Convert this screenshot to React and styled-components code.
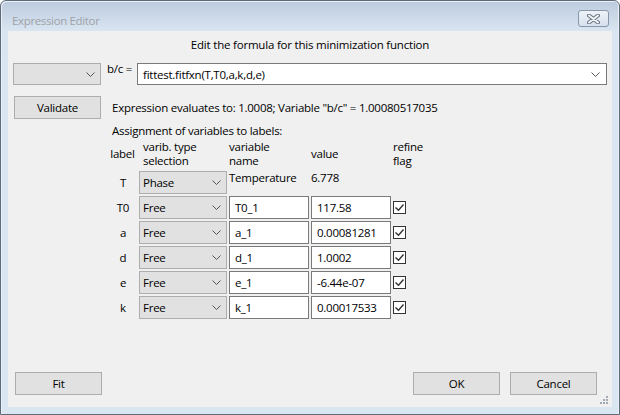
import React from "react";
import styled, { createGlobalStyle } from "styled-components";

const GlobalStyle = createGlobalStyle`
  html, body {
    margin: 0;
    padding: 0;
    background: #ffffff;
  }
  body {
    font-family: "Open Sans", "Liberation Sans", Arial, sans-serif;
    font-size: 11.5px;
    letter-spacing: -0.25px;
    color: #000000;
  }
`;

const rows = [
  { label: "T0", type: "Free", name: "T0_1", value: "117.58" },
  { label: "a", type: "Free", name: "a_1", value: "0.00081281" },
  { label: "d", type: "Free", name: "d_1", value: "1.0002" },
  { label: "e", type: "Free", name: "e_1", value: "-6.44e-07" },
  { label: "k", type: "Free", name: "k_1", value: "0.00017533" },
];

const Chevron = () => (
  <svg width="9" height="5" viewBox="0 0 9 5">
    <polyline points="0.5,0.5 4.5,4.5 8.5,0.5" fill="none" stroke="#555555" strokeWidth="1" />
  </svg>
);

const CloseGlyph = () => (
  <svg width="13" height="10" viewBox="0 0 13 10">
    <path d="M2 1.5 L11 8.5 M11 1.5 L2 8.5" stroke="#6b7785" strokeWidth="4" strokeLinecap="round" />
    <path d="M2 1.5 L11 8.5 M11 1.5 L2 8.5" stroke="#f4f6f8" strokeWidth="2" strokeLinecap="round" />
  </svg>
);

const Tick = () => (
  <svg width="11" height="11" viewBox="0 0 11 11">
    <polyline points="1.5,5.5 4.5,8.2 9.5,2.5" fill="none" stroke="#333333" strokeWidth="1.4" />
  </svg>
);

const Grip = () => (
  <svg width="9" height="9" viewBox="0 0 9 9">
    {[
      [6, 0],
      [3, 3],
      [6, 3],
      [0, 6],
      [3, 6],
      [6, 6],
    ].map(([x, y]) => (
      <rect key={`${x}-${y}`} x={x} y={y} width="2" height="2" fill="#a3a9b0" />
    ))}
  </svg>
);

export default function App() {
  return (
    <>
      <GlobalStyle />
      <Window>
        <TitleBar>
          <TitleText>Expression Editor</TitleText>
          <CloseButton>
            <CloseGlyph />
          </CloseButton>
        </TitleBar>
        <Client>
          <Heading>Edit the formula for this minimization function</Heading>
          <FormulaRow>
            <Combo $width={88}>
              <span />
              <Chevron />
            </Combo>
            <EqLabel>b/c =</EqLabel>
            <FormulaBox>
              <span>fittest.fitfxn(T,T0,a,k,d,e)</span>
              <Chevron />
            </FormulaBox>
          </FormulaRow>
          <ValidateRow>
            <Button>Validate</Button>
            <Message>
              Expression evaluates to: 1.0008; Variable "b/c" = 1.00080517035
            </Message>
          </ValidateRow>
          <Assignment>Assignment of variables to labels:</Assignment>
          <Grid>
            <HeadCell $center>label</HeadCell>
            <HeadCell $indent={4}>
              varib. type
              <br />
              selection
            </HeadCell>
            <HeadCell>
              variable
              <br />
              name
            </HeadCell>
            <HeadCell>value</HeadCell>
            <HeadCell>
              refine
              <br />
              flag
            </HeadCell>

            <RowLabel>T</RowLabel>
            <Combo>
              <span>Phase</span>
              <Chevron />
            </Combo>
            <PlainValue>Temperature</PlainValue>
            <PlainValue>6.778</PlainValue>
            <span />

            {rows.map((r) => (
              <React.Fragment key={r.label}>
                <RowLabel>{r.label}</RowLabel>
                <Combo>
                  <span>{r.type}</span>
                  <Chevron />
                </Combo>
                <Field>{r.name}</Field>
                <Field>{r.value}</Field>
                <CheckBox>
                  <Tick />
                </CheckBox>
              </React.Fragment>
            ))}
          </Grid>
          <Footer>
            <Button>Fit</Button>
            <FooterRight>
              <Button>OK</Button>
              <Button>Cancel</Button>
            </FooterRight>
          </Footer>
          <GripCorner>
            <Grip />
          </GripCorner>
        </Client>
      </Window>
    </>
  );
}

const Window = styled.div`
  width: 620px;
  height: 415px;
  box-sizing: border-box;
  display: flex;
  flex-direction: column;
  padding: 0 7px 7px;
  border: 1px solid #5f6b78;
  border-radius: 6px 6px 0 0;
  background: linear-gradient(#bccbdd 0px, #d2deec 22px, #dae5f2 30px, #dbe6f3 100%);
  box-shadow: inset 1px 1px 0 #e9f0f8, inset -1px 0 0 #e9f0f8;
`;

const TitleBar = styled.div`
  height: 30px;
  display: flex;
  flex-direction: row;
  justify-content: space-between;
  align-items: flex-start;
`;

const TitleText = styled.div`
  margin: 12px 0 0 4px;
  color: #9ea3a9;
  line-height: 15px;
  letter-spacing: -0.35px;
`;

const CloseButton = styled.div`
  width: 31px;
  height: 17px;
  box-sizing: border-box;
  margin: 9px 3px 0 0;
  display: flex;
  align-items: center;
  justify-content: center;
  border: 1px solid #8797ab;
  border-radius: 3px;
  background: linear-gradient(#eef3f8, #d6e0ec);
`;

const Client = styled.div`
  position: relative;
  flex: 1;
  display: flex;
  flex-direction: column;
  background: #f0f0f0;
`;

const Heading = styled.div`
  margin-top: 6px;
  line-height: 15px;
  text-align: center;
  letter-spacing: -0.2px;
`;

const FormulaRow = styled.div`
  height: 22px;
  display: flex;
  flex-direction: row;
  align-items: stretch;
  margin: 11px 5px 0 5px;
`;

const Combo = styled.div`
  width: ${(p) => (p.$width ? `${p.$width}px` : "auto")};
  box-sizing: border-box;
  display: flex;
  flex-direction: row;
  justify-content: space-between;
  align-items: center;
  padding: 0 5px 0 3px;
  border: 1px solid #adadad;
  background: #e1e1e1;
  line-height: 15px;
`;

const EqLabel = styled.div`
  margin: -2px 5px 0 6px;
  line-height: 15px;
`;

const FormulaBox = styled.div`
  flex: 1;
  box-sizing: border-box;
  display: flex;
  flex-direction: row;
  justify-content: space-between;
  align-items: center;
  padding: 0 6px 0 5px;
  border: 1px solid #7a7a7a;
  background: #ffffff;
`;

const ValidateRow = styled.div`
  display: flex;
  flex-direction: row;
  align-items: center;
  gap: 11px;
  margin: 11px 0 0 6px;
`;

const Button = styled.div`
  width: 87px;
  height: 23px;
  box-sizing: border-box;
  display: flex;
  align-items: center;
  justify-content: center;
  border: 1px solid #adadad;
  background: #e1e1e1;
  line-height: 15px;
`;

const Message = styled.div`
  line-height: 15px;
  white-space: nowrap;
`;

const Assignment = styled.div`
  margin: 4px 0 0 104px;
  line-height: 15px;
`;

const Grid = styled.div`
  display: grid;
  grid-template-columns: 29px 88px 80px 80px 13px;
  grid-template-rows: 28px;
  grid-auto-rows: 23px;
  column-gap: 2px;
  row-gap: 2px;
  margin: 3px 0 0 100px;
`;

const HeadCell = styled.div`
  align-self: center;
  padding-left: ${(p) => p.$indent || 0}px;
  text-align: ${(p) => (p.$center ? "center" : "left")};
  line-height: 14px;
  white-space: nowrap;
  margin-bottom: 2px;
`;

const RowLabel = styled.div`
  align-self: center;
  padding-left: 1px;
  text-align: center;
  line-height: 15px;
  margin-top: -1px;
`;

const PlainValue = styled.div`
  align-self: start;
  margin-top: -1px;
  line-height: 15px;
  white-space: nowrap;
`;

const Field = styled.div`
  box-sizing: border-box;
  display: flex;
  align-items: center;
  padding-left: 5px;
  border: 1px solid #7a7a7a;
  background: #ffffff;
  line-height: 15px;
`;

const CheckBox = styled.div`
  width: 13px;
  height: 13px;
  box-sizing: border-box;
  align-self: center;
  display: flex;
  align-items: center;
  justify-content: center;
  border: 1px solid #333333;
  background: #ffffff;
`;

const Footer = styled.div`
  display: flex;
  flex-direction: row;
  justify-content: space-between;
  margin: auto 15px 12px 7px;
`;

const FooterRight = styled.div`
  display: flex;
  flex-direction: row;
  gap: 10px;
`;

const GripCorner = styled.div`
  position: absolute;
  right: 3px;
  bottom: 2px;
  display: flex;
`;
